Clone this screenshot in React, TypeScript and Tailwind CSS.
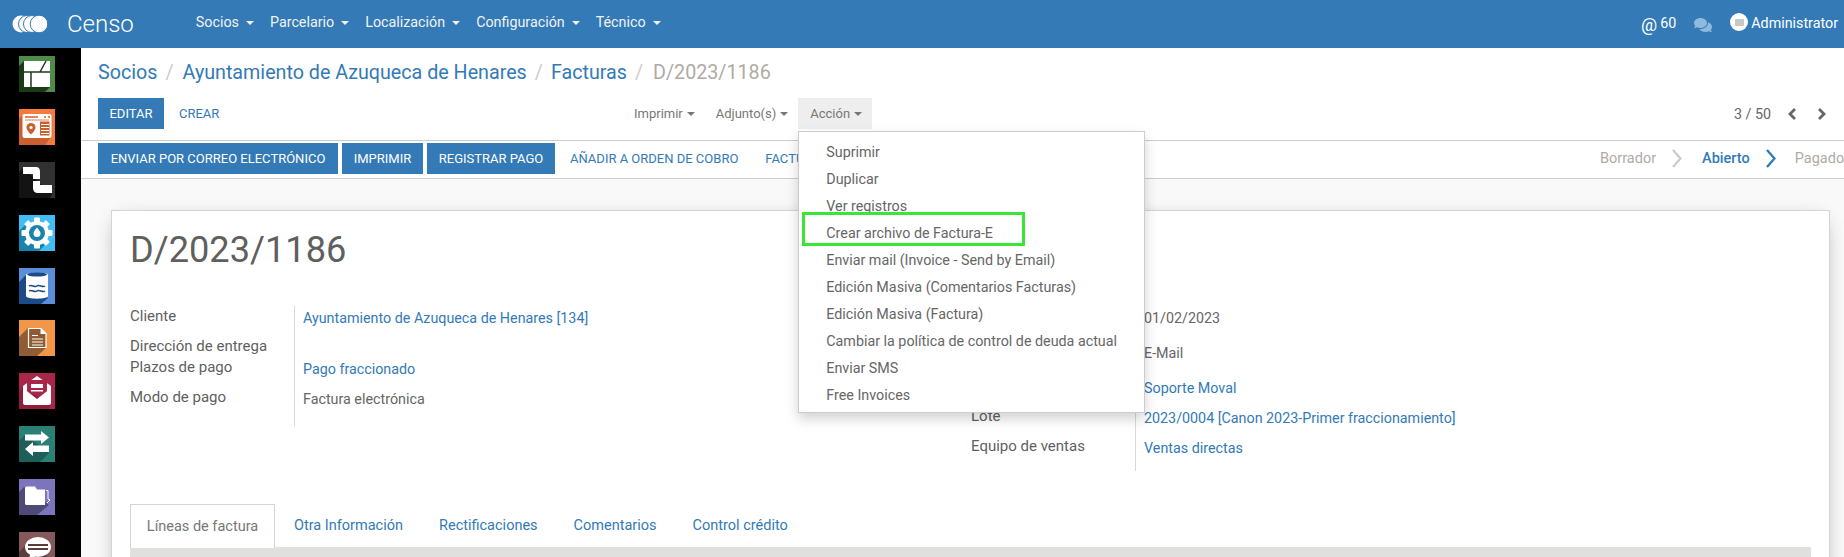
import { FaComments } from "react-icons/fa";

const navItems = ["Socios", "Parcelario", "Localización", "Configuración", "Técnico"];
const menuItems = [
  "Suprimir",
  "Duplicar",
  "Ver registros",
  "Crear archivo de Factura-E",
  "Enviar mail (Invoice - Send by Email)",
  "Edición Masiva (Comentarios Facturas)",
  "Edición Masiva (Factura)",
  "Cambiar la política de control de deuda actual",
  "Enviar SMS",
  "Free Invoices",
];
const tabs = ["Otra Información", "Rectificaciones", "Comentarios", "Control crédito"];

function Caret({ className }: { className: string }) {
  return <span className={"inline-block h-0 w-0 border-x-4 border-t-4 border-x-transparent " + className} />;
}

function Tile({ bg, shadow, points = "5,5 0,10 0,36 26,36 31,31", children }: any) {
  return (
    <svg width="36" height="36" viewBox="0 0 36 36" className="block shrink-0">
      <rect width="36" height="36" fill={bg} />
      <polygon points={points} fill={shadow} />
      {children}
    </svg>
  );
}

function SideIcons() {
  return (
    <>
      <Tile bg="#4f8a49" shadow="#1d3a18">
        <rect x="5" y="5" width="26" height="26" fill="#fff" />
        <path d="M5 16H31M12 16V31M27 5L21 16" stroke="#1d3a18" strokeWidth="1.5" fill="none" />
      </Tile>
      <Tile bg="#f57a3c" shadow="#c9602e" points="4,6 0,10 0,36 26,36 32,28">
        <rect x="3.5" y="5" width="29" height="24" rx="2" fill="#fff" />
        <path d="M6 8H19M25 8H27M29 8H31" stroke="#d2632c" strokeWidth="1.4" />
        <path d="M6 11H30" stroke="#d2632c" strokeWidth="0.8" />
        <path d="M12 14a4.500 4.500 0 0 1 4.500 4.500c0 3-4.500 7-4.500 7s-4.500-4-4.500-7A4.500 4.500 0 0 1 12 14z" fill="#c9602e" />
        <circle cx="12" cy="18.500" r="1.600" fill="#fff" />
        <rect x="21" y="12.500" width="9.500" height="14" fill="#c9602e" />
        <path d="M22 15.500H30M22 18.500H30M22 21.500H30M22 24.500H30" stroke="#fff" strokeWidth="1.100" />
      </Tile>
      <Tile bg="#313131" shadow="#131313" points="4,6 0,10 0,36 31,36 33,32">
        <path d="M4 5H17Q21 5 21 10V17H14V12H4z" fill="#fff" />
        <path d="M14 19H21V23H33V31H19Q14 31 14 26z" fill="#fff" />
      </Tile>
      <Tile bg="#40bdf2" shadow="#1a83ad" points="8,8 0,16 0,36 20,36 28,28">
        <g fill="#fff">
          <circle cx="18" cy="18" r="12" />
          <rect x="15" y="2.500" width="6" height="31" rx="1" />
          <rect x="2.500" y="15" width="31" height="6" rx="1" />
          <rect x="15" y="2.500" width="6" height="31" rx="1" transform="rotate(45 18 18)" />
          <rect x="15" y="2.500" width="6" height="31" rx="1" transform="rotate(-45 18 18)" />
        </g>
        <circle cx="18" cy="18" r="8" fill="#1a83ad" />
        <path d="M18 12.500c2 2.500 3.500 4 3.500 6a3.500 3.500 0 0 1-7 0c0-2 1.500-3.500 3.500-6z" fill="#fff" />
      </Tile>
      <Tile bg="#5a8fd8" shadow="#1c4a86" points="7,7 0,14 0,36 22,36 29,30">
        <path d="M7 6.500C7 4.500 29 4.500 29 6.500V28C29 31.500 7 31.500 7 28z" fill="#fff" />
        <ellipse cx="18" cy="6.500" rx="10" ry="2" fill="#1c4a86" />
        <path d="M10 18c2.500-2 5.500 2 8 0s5.500 2 8 0M10 23c2.500-2 5.500 2 8 0s5.500 2 8 0" stroke="#1c4a86" strokeWidth="1.500" fill="none" />
      </Tile>
      <Tile bg="#f2964a" shadow="#8f5c33" points="9,8 0,17 0,36 18,36 27,28">
        <path d="M9.500 8.500H22L27 13.500V27.500H9.500z" fill="#8f5c33" stroke="#fff" strokeWidth="1.200" />
        <path d="M21.500 8V14H27.500z" fill="#fff" />
        <path d="M13 15.500H19M13 19H24M13 22H24M13 25H24" stroke="#fff" strokeWidth="1.200" />
      </Tile>
      <Tile bg="#a92649" shadow="#8f1f3d" points="4,14 0,18 0,36 30,36 32,32">
        <path d="M4 13L18 3L32 13V20H4z" fill="#fff" />
        <rect x="8" y="7" width="20" height="14" fill="#a92649" />
        <rect x="12" y="11" width="12" height="4" fill="#fff" />
        <rect x="12" y="17" width="12" height="1.500" fill="#fff" />
        <path d="M4 15L18 26L32 15V30a2 2 0 0 1-2 2H6a2 2 0 0 1-2-2z" fill="#fff" />
      </Tile>
      <Tile bg="#2a7f76" shadow="#1e5f5a" points="6,9 0,15 0,36 21,36 30,27">
        <path d="M6 8.500H22V5L30 11.500L22 18V14.500H6z" fill="#fff" />
        <path d="M30 19.500H14V16L6 23L14 30V26H30z" fill="#fff" />
      </Tile>
      <Tile bg="#7c75bb" shadow="#4e4a78" points="5,8 0,13 0,36 18,36 30,26">
        <path d="M6 9a1.500 1.500 0 0 1 1.500-1.500H16L18 10.500H26V26H7.500A1.500 1.500 0 0 1 6 24.500z" fill="#fff" />
        <path d="M27 11.500H29V20L31 21L28 24" stroke="#fff" strokeWidth="1" fill="none" />
      </Tile>
      <Tile bg="#85595b" shadow="#5c3d3e" points="6,14 0,20 0,36 24,36 32,26">
        <ellipse cx="19" cy="15" rx="13" ry="10" fill="#fff" />
        <path d="M11 22L10 31L17 25z" fill="#fff" />
        <path d="M9 13H29M9 17H29" stroke="#5c3d3e" strokeWidth="2" />
      </Tile>
    </>
  );
}

function Chevron({ dir, className }: { dir: "left" | "right"; className: string }) {
  return (
    <svg width="10" height="12" viewBox="0 0 10 12" className={className}>
      <polyline points={dir === "left" ? "8,1 3,6 8,11" : "2,1 7,6 2,11"} fill="none" stroke="currentColor" strokeWidth="2.800" />
    </svg>
  );
}

function StatusArrow({ className }: { className: string }) {
  return (
    <svg width="10" height="19" viewBox="0 0 10 19" className={className}>
      <polyline points="1,1 8.500,9.500 1,18" fill="none" stroke="currentColor" strokeWidth="2.400" />
    </svg>
  );
}

function Row({ h, label, children }: { h: string; label?: string; children?: any }) {
  return (
    <div className={"flex " + h}>
      <div className="w-[164px] pr-2 text-[15px] text-[#5f5f5f]">{label}</div>
      <div className="border-l border-[#d9d9d9] pl-[8px] pt-[2px]">{children}</div>
    </div>
  );
}

export default function App() {
  return (
    <div className="flex h-[557px] w-[1844px] flex-col overflow-hidden bg-white font-[Roboto,sans-serif] text-[14.3px] leading-5 text-[#666]">
      <nav className="flex h-12 shrink-0 items-center bg-[#337ab7] text-[#f2f2f2]">
        <svg width="36" height="18" viewBox="0 0 36 18" className="ml-3 shrink-0">
          <circle cx="9" cy="9" r="8.500" fill="#fff" />
          <circle cx="15" cy="9" r="8.500" fill="#fff" stroke="#337ab7" />
          <circle cx="20" cy="9" r="8.500" fill="#fff" stroke="#337ab7" />
          <circle cx="27" cy="9" r="8.800" fill="#fff" stroke="#337ab7" />
        </svg>
        <span className="ml-[19px] text-[24px] font-light text-white">Censo</span>
        <div className="ml-[62px] flex gap-[16px] pb-[4px]">
          {navItems.map((item) => (
            <span key={item} className="flex items-center gap-[7px]">
              {item}
              <Caret className="mt-[2px] border-t-[#f2f2f2]" />
            </span>
          ))}
        </div>
        <div className="ml-auto flex items-center pr-[6px] text-white">
          <span className="mt-[2px] text-[18px] leading-5">@</span>
          <span className="ml-[3px] mb-[3px]">60</span>
          <FaComments className="ml-[18px] mt-[2px] text-[18px] text-[#8fb9dd]" />
          <span className="ml-[18px] mb-[4px] flex h-[18px] w-[18px] items-center justify-center rounded-full bg-white">
            <span className="h-[7px] w-[9px] rounded-[1px] bg-[#c8c8c8]" />
          </span>
          <span className="ml-[3px] mb-[3px]">Administrator</span>
        </div>
      </nav>

      <div className="flex min-h-0 flex-1">
        <aside className="flex w-[81px] shrink-0 flex-col items-start gap-[16.9px] bg-black pl-[19px] pt-2">
          <SideIcons />
        </aside>

        <main className="flex min-w-0 flex-1 flex-col">
          <header className="shrink-0 bg-white">
            <div className="flex h-[50px] items-center pl-[17px] text-[19.7px] text-[#337ab7]">
              <span>Socios</span>
              <span className="px-[8px] text-[#ccc]">/</span>
              <span className="ml-[1px]">Ayuntamiento de Azuqueca de Henares</span>
              <span className="px-[8px] text-[#ccc]">/</span>
              <span>Facturas</span>
              <span className="px-[8px] text-[#ccc]">/</span>
              <span className="ml-[2px] text-[#b0aaa5]">D/2023/1186</span>
            </div>

            <div className="flex h-[43px] items-start border-b border-[#ccc] pl-[17px]">
              <div className="flex w-[524px] shrink-0 text-[13px]">
                <button className="h-[31px] w-[66px] bg-[#337ab7] text-white">EDITAR</button>
                <button className="ml-[15px] h-[31px] text-[#337ab7]">CREAR</button>
              </div>
              <div className="flex text-[13px]">
                <span className="flex h-[31px] items-center gap-[4px] pl-3 pr-[10px] text-[#777]">
                  Imprimir
                  <Caret className="border-t-[#777]" />
                </span>
                <span className="ml-[3px] flex h-[31px] items-center gap-[4px] px-2 text-[#777]">
                  Adjunto(s)
                  <Caret className="border-t-[#777]" />
                </span>
                <div className="relative ml-[2px]">
                  <span className="flex h-[31px] w-[74px] items-center gap-[4px] bg-[#eee] pl-3 text-[#777]">
                    Acción
                    <Caret className="border-t-[#777]" />
                  </span>
                  <ul className="absolute left-0 top-[33px] z-20 h-[282px] w-[347px] border border-[#ccc] bg-white pt-[6px] shadow-[0_6px_12px_rgba(0,0,0,0.175)]">
                    {menuItems.map((item) => (
                      <li key={item} className="flex h-[27px] items-center whitespace-nowrap pl-[27px] text-[14.3px] text-[#666]">
                        {item}
                      </li>
                    ))}
                  </ul>
                  <div className="absolute left-[4px] top-[114px] z-30 h-[34px] w-[223px] border-[3px] border-[#3ae635]" />
                </div>
              </div>
              <div className="ml-auto flex h-[31px] items-center pr-[17px]">
                <span className="-translate-x-[1px]">3 / 50</span>
                <Chevron dir="left" className="ml-[15px] text-[#666]" />
                <Chevron dir="right" className="ml-[20px] text-[#666]" />
              </div>
            </div>

            <div className="flex h-[38px] items-start border-b border-[#ccc] pl-[17px] pt-[2px] text-[13px]">
              <button className="h-[31px] w-[240px] bg-[#337ab7] text-white">ENVIAR POR CORREO ELECTRÓNICO</button>
              <button className="ml-1 h-[31px] w-[81px] bg-[#337ab7] text-white">IMPRIMIR</button>
              <button className="ml-1 h-[31px] w-[128px] bg-[#337ab7] text-white">REGISTRAR PAGO</button>
              <button className="ml-[15px] h-[31px] text-[#337ab7]">AÑADIR A ORDEN DE COBRO</button>
              <button className="ml-[27px] h-[31px] text-[#337ab7]">FACTURA</button>
              <div className="ml-auto flex h-[31px] w-[244px] shrink-0 items-center overflow-hidden text-[14.5px] text-[#b0aaa5]">
                <span>Borrador</span>
                <StatusArrow className="ml-[16px] shrink-0 text-[#ccc]" />
                <span className="ml-[20px] font-medium text-[#337ab7]">Abierto</span>
                <StatusArrow className="ml-[16px] shrink-0 text-[#337ab7]" />
                <span className="ml-[19px]">Pagado</span>
              </div>
            </div>
          </header>

          <div className="min-h-0 flex-1 bg-[#f9f9f9] pl-[30px] pr-[14px] pt-[31px]">
            <section className="h-[400px] border border-[#d4d4d4] bg-white px-[18px] pt-[18px] shadow-[0_5px_20px_-8px_rgba(0,0,0,0.45)]">
              <h1 className="h-[77px] text-[36.2px] leading-[42px] text-[#5f5f5f]">D/2023/1186</h1>

              <div className="flex h-[198px]">
                <div className="w-[841px] shrink-0">
                  <Row h="h-[30px]" label="Cliente">
                    <span className="text-[#337ab7]">Ayuntamiento de Azuqueca de Henares [134]</span>
                  </Row>
                  <Row h="h-[21px]" label="Dirección de entrega" />
                  <Row h="h-[30px]" label="Plazos de pago">
                    <span className="text-[#337ab7]">Pago fraccionado</span>
                  </Row>
                  <Row h="h-[39px]" label="Modo de pago">
                    Factura electrónica
                  </Row>
                </div>
                <div>
                  <Row h="h-[35px]">01/02/2023</Row>
                  <Row h="h-[35px]">E-Mail</Row>
                  <Row h="h-[30px]">
                    <span className="text-[#337ab7]">Soporte Moval</span>
                  </Row>
                  <Row h="h-[30px]" label="Lote">
                    <span className="text-[#337ab7]">2023/0004 [Canon 2023-Primer fraccionamiento]</span>
                  </Row>
                  <Row h="h-[35px]" label="Equipo de ventas">
                    <span className="text-[#337ab7]">Ventas directas</span>
                  </Row>
                </div>
              </div>

              <div className="relative z-10 flex h-[43px] items-stretch text-[14.5px]">
                <div className="flex h-[44px] w-[145px] items-center justify-center border border-b-0 border-[#d4d4d4] bg-white text-[#777]">
                  Líneas de factura
                </div>
                <div className="ml-[19px] flex items-center gap-[36px] pt-[1px] text-[#337ab7]">
                  {tabs.map((tab) => (
                    <span key={tab}>{tab}</span>
                  ))}
                </div>
              </div>
              <div className="h-[30px] bg-[#e0e0de]" />
            </section>
          </div>
        </main>
      </div>
    </div>
  );
}
